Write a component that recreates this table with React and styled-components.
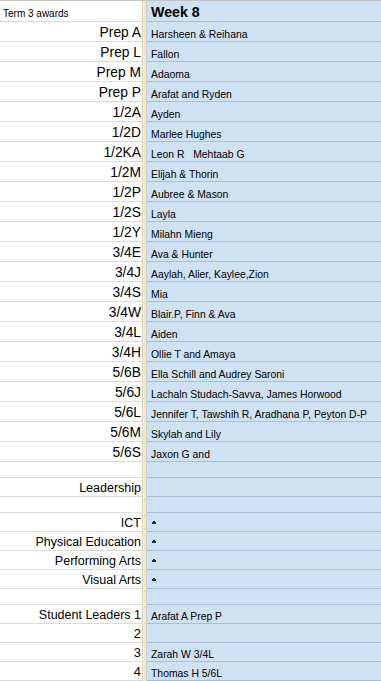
import styled, { createGlobalStyle } from "styled-components";

const GlobalStyle = createGlobalStyle`
  body {
    margin: 0;
    background: #ffffff;
    font-family: "Liberation Sans", Arial, sans-serif;
    color: #000;
    overflow: hidden;
  }
`;

const Sheet = styled.div`
  width: 381px;
  height: 681px;
  display: flex;
  flex-direction: column;
  border-top: 1px solid #c4c4c4;
  box-sizing: border-box;
  overflow: hidden;
`;

const Row = styled.div`
  display: grid;
  grid-template-columns: 142px 5px 1fr;
  height: ${(p) => p.$h}px;
  flex: 0 0 auto;
`;

const LabelCell = styled.div`
  display: flex;
  align-items: flex-end;
  justify-content: ${(p) => (p.$left ? "flex-start" : "flex-end")};
  padding: 0 ${(p) => (p.$left ? "0" : "1px")} ${(p) => p.$pb ?? 1}px ${(p) => (p.$left ? "3px" : "0")};
  border-bottom: 1px solid #dadada;
  font-size: ${(p) => p.$size}px;
  line-height: normal;
  white-space: nowrap;
  box-sizing: border-box;
  overflow: hidden;
`;

const Divider = styled.div`
  background: linear-gradient(
    to right,
    #e2cdb0 0 1px,
    #f6f1e4 1px 2px,
    #f1e7bf 2px 3px,
    #eeeadb 3px 4px,
    #c9ccd2 4px 5px
  );
`;

const ValueCell = styled.div`
  display: flex;
  align-items: flex-end;
  padding: 0 0 ${(p) => p.$pb ?? 1}px 4px;
  background: #cfe2f3;
  border-bottom: 1px solid #a9bed2;
  font-size: ${(p) => p.$size || 10.4}px;
  font-weight: ${(p) => (p.$bold ? 700 : 400)};
  line-height: normal;
  white-space: pre;
  box-sizing: border-box;
  overflow: hidden;
`;

const Mark = styled.svg`
  display: block;
  width: 4px;
  height: 3px;
  margin: 0 0 6px 1px;
`;

const Tick = () => (
  <Mark viewBox="0 0 4 3">
    <path d="M1 0h2v1h1v2H0V1h1z" fill="#17276b" />
  </Mark>
);

const CLASS = 13.8;
const TEXT = 12.5;

const rows = [
  { label: "Prep A", size: CLASS, value: "Harsheen & Reihana", h: 20 },
  { label: "Prep L", size: CLASS, value: "Fallon", h: 20 },
  { label: "Prep M", size: CLASS, value: "Adaoma", h: 20 },
  { label: "Prep P", size: CLASS, value: "Arafat and Ryden", h: 20 },
  { label: "1/2A", size: CLASS, value: "Ayden", h: 20 },
  { label: "1/2D", size: CLASS, value: "Marlee Hughes", h: 20 },
  { label: "1/2KA", size: CLASS, value: "Leon R   Mehtaab G", h: 20 },
  { label: "1/2M", size: CLASS, value: "Elijah & Thorin", h: 20 },
  { label: "1/2P", size: CLASS, value: "Aubree & Mason", h: 20 },
  { label: "1/2S", size: CLASS, value: "Layla", h: 20 },
  { label: "1/2Y", size: CLASS, value: "Milahn Mieng", h: 20 },
  { label: "3/4E", size: CLASS, value: "Ava & Hunter", h: 20 },
  { label: "3/4J", size: CLASS, value: "Aaylah, Alier, Kaylee,Zion", h: 20 },
  { label: "3/4S", size: CLASS, value: "Mia", h: 20 },
  { label: "3/4W", size: CLASS, value: "Blair.P, Finn & Ava", h: 20 },
  { label: "3/4L", size: CLASS, value: "Aiden", h: 20 },
  { label: "3/4H", size: CLASS, value: "Ollie T and Amaya", h: 20 },
  { label: "5/6B", size: CLASS, value: "Ella Schill and Audrey Saroni", h: 20 },
  { label: "5/6J", size: CLASS, value: "Lachaln Studach-Savva, James Horwood", h: 20 },
  { label: "5/6L", size: CLASS, value: "Jennifer T, Tawshih R, Aradhana P, Peyton D-P", h: 20 },
  { label: "5/6M", size: CLASS, value: "Skylah and Lily", h: 20 },
  { label: "5/6S", size: CLASS, value: "Jaxon G and", h: 20 },
  { label: "", size: TEXT, value: "", h: 16 },
  { label: "Leadership", size: TEXT, value: "", h: 19 },
  { label: "", size: TEXT, value: "", h: 16 },
  { label: "ICT", size: TEXT, tick: true, h: 19 },
  { label: "Physical Education", size: TEXT, tick: true, h: 19 },
  { label: "Performing Arts", size: TEXT, tick: true, h: 19 },
  { label: "Visual Arts", size: TEXT, tick: true, h: 19 },
  { label: "", size: TEXT, value: "", h: 16 },
  { label: "Student Leaders 1", size: TEXT, value: "Arafat A Prep P", h: 19 },
  { label: "2", size: 13, value: "", h: 19 },
  { label: "3", size: 13, value: "Zarah W 3/4L", h: 19 },
  { label: "4", size: 13, value: "Thomas H 5/6L", h: 19 },
];

export default function App() {
  return (
    <>
      <GlobalStyle />
      <Sheet>
        <Row $h={21}>
          <LabelCell $left $size={10} $pb={2}>
            Term 3 awards
          </LabelCell>
          <Divider />
          <ValueCell $size={14.2} $bold $pb={1}>
            Week 8
          </ValueCell>
        </Row>
        {rows.map((r, i) => (
          <Row key={i} $h={r.h}>
            <LabelCell $size={r.size}>{r.label}</LabelCell>
            <Divider />
            <ValueCell>{r.tick ? <Tick /> : r.value}</ValueCell>
          </Row>
        ))}
      </Sheet>
    </>
  );
}
